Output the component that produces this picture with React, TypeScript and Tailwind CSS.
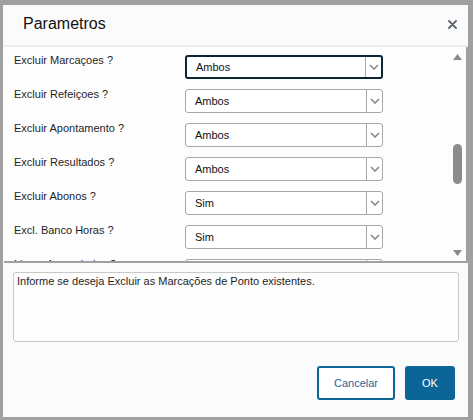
const rows = [
  { label: "Excluir Marcaçoes ?", value: "Ambos", focused: true },
  { label: "Excluir Refeiçoes ?", value: "Ambos" },
  { label: "Excluir Apontamento ?", value: "Ambos" },
  { label: "Excluir Resultados ?", value: "Ambos" },
  { label: "Excluir Abonos ?", value: "Sim" },
  { label: "Excl. Banco Horas ?", value: "Sim" },
  { label: "Limpa Acumulados ?", value: "Sim" },
];

const font = { fontFamily: '"Liberation Sans", Arial, sans-serif' };

export default function App() {
  return (
    <div
      className="h-[420px] w-[473px] overflow-hidden bg-[#a0a0a0] pl-[3px] pt-[5px]"
      style={font}
    >
      <div className="flex h-[412px] w-[465px] flex-col bg-[#fbfbfb]">
        <div className="flex h-[42px] shrink-0 items-center justify-between border-b-2 border-[#ececec] pl-[20px] pr-[11px] pb-[2px]">
          <h1 className="text-[16px] leading-[20px] text-[#111]">Parametros</h1>
          <button type="button" className="flex h-[9px] w-[9px] items-center justify-center">
            <svg width="9" height="9" viewBox="0 0 9 9">
              <path d="M1 1 L8 8 M8 1 L1 8" stroke="#5d6772" strokeWidth="1.8" strokeLinecap="round" />
            </svg>
          </button>
        </div>

        <div className="ml-px flex h-[216px] shrink-0 border-b-2 border-r-2 border-[#a0a0a0] bg-[#fdfdfd]">
          <div className="flex flex-1 flex-col gap-[10px] overflow-hidden pl-[10px] pt-[8px]">
            {rows.map((r) => (
              <Row key={r.label} label={r.label} value={r.value} focused={r.focused} />
            ))}
          </div>
          <div className="flex w-[16px] shrink-0 flex-col items-center pr-[2px] pt-[7px] pb-[5px]">
            <svg width="9" height="6" viewBox="0 0 9 6">
              <path d="M4.5 0 L9 6 L0 6 Z" fill="#8a8a8a" />
            </svg>
            <div className="mt-[84px] h-[40px] w-[9px] rounded-full bg-[#8c8c8c]" />
            <div className="flex-1" />
            <svg width="9" height="6" viewBox="0 0 9 6">
              <path d="M0 0 L9 0 L4.5 6 Z" fill="#8a8a8a" />
            </svg>
          </div>
        </div>

        <div className="ml-[10px] mr-[9px] mt-[9px] h-[70px] rounded-[3px] border border-[#c8c8c8] bg-[#fdfdfd] pl-[3px] pt-[2px]">
          <p className="text-[11px] leading-[13px] text-[#1f1f1f]">
            Informe se deseja Excluir as Marcações de Ponto existentes.
          </p>
        </div>

        <div className="mt-[24px] flex justify-end gap-[10px] pr-[13px]">
          <button
            type="button"
            className="h-[34px] w-[78px] rounded-[3px] border-2 border-[#0b6597] bg-white text-[11px] text-[#1c6897]"
          >
            Cancelar
          </button>
          <button
            type="button"
            className="h-[34px] w-[50px] rounded-[3px] bg-[#0b6597] text-[11px] text-white"
          >
            OK
          </button>
        </div>
      </div>
    </div>
  );
}

function Row({ label, value, focused }: { label: string; value: string; focused?: boolean }) {
  return (
    <div className="flex shrink-0 items-start">
      <p className="-mt-[1px] w-[171px] shrink-0 text-[11px] leading-[13px] text-[#1f1f1f]">{label}</p>
      <div
        className={`flex h-[24px] w-[198px] shrink-0 items-center rounded-[3px] bg-white ${
          focused ? "border-2 border-[#0d2433]" : "border border-[#a8a8a8]"
        }`}
      >
        <span className="flex-1 pl-[9px] text-[11px] leading-[13px] text-[#111]">{value}</span>
        <div className="flex h-full w-[16px] items-center justify-center border-l border-[#a8a8a8]">
          <svg width="10" height="6" viewBox="0 0 10 6">
            <path d="M1 1 L5 5 L9 1" stroke="#8a8a8a" strokeWidth="1.6" fill="none" />
          </svg>
        </div>
      </div>
    </div>
  );
}
